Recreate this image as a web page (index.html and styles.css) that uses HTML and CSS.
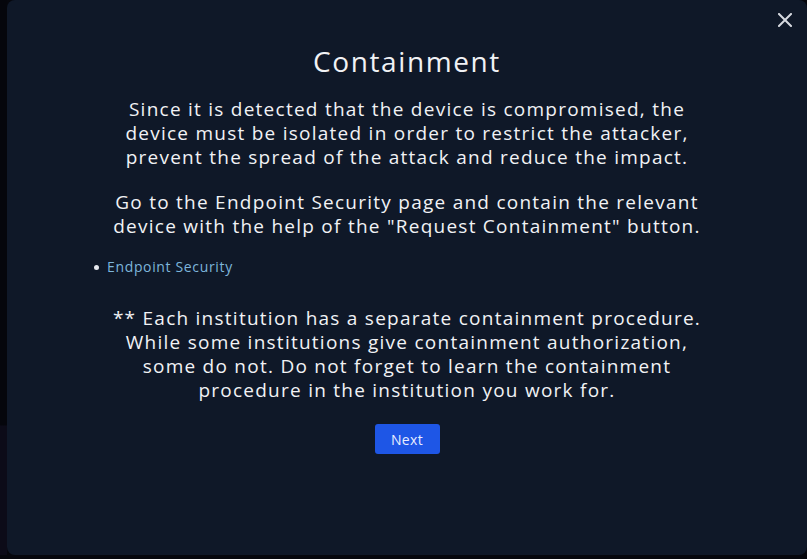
FILE: index.html
```html
<!DOCTYPE html>
<html lang="en">
<head>
<meta charset="utf-8">
<title>Containment</title>
<link rel="stylesheet" href="styles.css">
</head>
<body>
<div class="stage">
  <div class="backdrop-strip"></div>
  <section class="modal">
    <button class="close" aria-label="Close">
      <svg width="14" height="14" viewBox="0 0 14 14"><path d="M1 1L13 13M13 1L1 13" stroke="#d6d9e0" stroke-width="2" stroke-linecap="square"/></svg>
    </button>
    <div class="content">
      <h1 class="title">Containment</h1>
      <p class="text p1">Since it is detected that the device is compromised, the device must be isolated in order to restrict the attacker, prevent the spread of the attack and reduce the impact.</p>
      <p class="text p2">Go to the Endpoint Security page and contain the relevant device with the help of the "Request Containment" button.</p>
      <ul class="links">
        <li><a href="#" class="link">Endpoint Security</a></li>
      </ul>
      <p class="text p3">** Each institution has a separate containment procedure. While some institutions give containment authorization, some do not. Do not forget to learn the containment procedure in the institution you work for.</p>
      <button class="next">Next</button>
    </div>
  </section>
</div>
</body>
</html>
```
FILE: styles.css
```css
* { box-sizing: border-box; }
html, body { margin: 0; padding: 0; }
body {
  width: 807px;
  height: 559px;
  overflow: hidden;
  background: #06070d;
  font-family: "Open Sans", "Noto Sans", sans-serif;
}
.stage {
  display: flex;
  height: 559px;
}
.backdrop-strip {
  width: 7px;
  flex: none;
  background: linear-gradient(to bottom, #05060c 0, #05060c 425px, #0c0b18 426px, #0c0b18 100%);
  height: 555px;
}
.modal {
  position: relative;
  width: 800px;
  height: 555px;
  background: #0f1828;
  border-radius: 8px;
}
.close {
  position: absolute;
  top: 13px;
  right: 15px;
  width: 14px;
  height: 14px;
  padding: 0;
  border: 0;
  background: none;
  display: flex;
}
.content {
  display: flex;
  flex-direction: column;
  align-items: center;
  padding: 44px 87px 0 87px;
  color: #f1f2f5;
}
.title {
  margin: 0;
  font-size: 28px;
  line-height: 34px;
  font-weight: 500;
  letter-spacing: 1.6px;
}
.text {
  margin: 0;
  text-align: center;
  font-size: 19px;
  line-height: 24px;
  letter-spacing: 1.25px;
  max-width: 608px;
}
.p1 { margin-top: 19px; }
.p2 { margin-top: 21px; }
.links {
  align-self: stretch;
  list-style: none;
  margin: 19px 0 0 0;
  padding: 0;
  font-size: 14px;
  line-height: 20px;
}
.links li {
  display: flex;
  align-items: center;
}
.links li::before {
  content: "";
  width: 5px;
  height: 5px;
  border-radius: 50%;
  background: #e6e8ee;
  margin-right: 8px;
  margin-top: 1px;
}
.link {
  color: #7db5db;
  text-decoration: none;
  letter-spacing: 0.65px;
}
.p3 { margin-top: 29px; }
.next {
  margin-top: 22px;
  width: 65px;
  height: 30px;
  border: 0;
  border-radius: 3px;
  background: #1e56e6;
  color: #e8edff;
  font-family: "Open Sans", sans-serif;
  font-size: 14px;
  letter-spacing: 0.3px;
  padding: 0;
}
```
